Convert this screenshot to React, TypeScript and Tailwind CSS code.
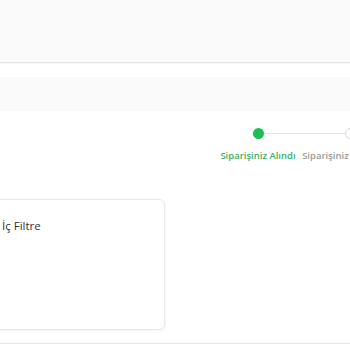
import React from "react";

export default function App() {
  const font = { fontFamily: '"Open Sans", "Noto Sans", sans-serif' };
  return (
    <div className="w-[350px] h-[350px] overflow-hidden bg-white flex flex-col" style={font}>
      <div className="h-[63px] bg-[#fafafa] border-b border-[#e6e6e6] shadow-[0_1px_1px_rgba(0,0,0,0.03)] shrink-0" />
      <div className="h-[14px] shrink-0" />
      <div className="h-[34px] bg-[#fafafa] shrink-0" />
      <div className="flex pl-[212px] pt-[17px] shrink-0">
        <div className="relative w-[92px] flex flex-col items-center shrink-0">
          <div className="w-[11px] h-[11px] rounded-full bg-[#1fbd55]" />
          <div className="absolute left-[52px] top-[5px] w-[82px] h-px bg-[#e3e3e3]" />
          <div className="mt-[11px] text-[9.5px] leading-[12px] font-semibold text-[#3cae66] whitespace-nowrap">
            Siparişiniz Alındı
          </div>
        </div>
        <div className="w-[92px] flex flex-col items-center shrink-0">
          <div className="w-[11px] h-[11px] rounded-full border border-[#d9d9d9] bg-white" />
          <div className="mt-[11px] text-[9.5px] leading-[12px] font-semibold text-[#9a9a9a] whitespace-nowrap">
            Siparişiniz Hazırlandı
          </div>
        </div>
      </div>
      <div className="flex pt-[37px] shrink-0">
        <div className="ml-[-16px] w-[181px] h-[131px] bg-white border border-[#e8e8e8] rounded-[6px] shadow-[0_1px_3px_rgba(0,0,0,0.06)] pl-[17px] pt-[18px]">
          <div className="text-[11.5px] leading-[16px] text-[#333]">İç Filtre</div>
        </div>
      </div>
      <div className="mt-[13px] border-t border-[#e6e6e6] shrink-0" />
    </div>
  );
}
